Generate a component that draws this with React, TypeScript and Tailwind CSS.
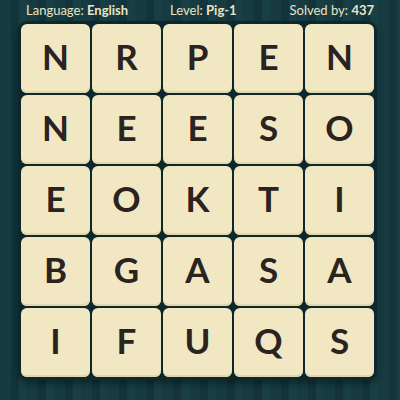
const LETTERS = [
  ['N', 'R', 'P', 'E', 'N'],
  ['N', 'E', 'E', 'S', 'O'],
  ['E', 'O', 'K', 'T', 'I'],
  ['B', 'G', 'A', 'S', 'A'],
  ['I', 'F', 'U', 'Q', 'S'],
];

function Tile({ letter }: { letter: string }) {
  return (
    <div className="w-[69px] h-[69px] rounded-[6px] bg-[#f1e8c3] shadow-[inset_0_-2px_0_#e3d7aa] flex items-center justify-center pb-[5px]">
      <span className="text-[35px] font-bold leading-none text-[#2a231f]">{letter}</span>
    </div>
  );
}

export default function App() {
  return (
    <div
      className="w-[400px] h-[400px] overflow-hidden bg-[repeating-linear-gradient(90deg,#163b41_0px,#163b41_11px,#12343a_11px,#12343a_19px,#183f45_19px,#183f45_27px)]"
      style={{ fontFamily: 'Lato, "Noto Sans", sans-serif' }}
    >
      {/* Header */}
      <div className="h-[21px] flex items-center px-[26px] text-[13px] text-[#ebe4c4]">
        <span>
          Language: <span className="font-bold">English</span>
        </span>
        <span className="ml-[42px]">
          Level: <span className="font-bold">Pig-1</span>
        </span>
        <span className="ml-auto">
          Solved by: <span className="font-bold">437</span>
        </span>
      </div>

      {/* Board */}
      <div className="ml-[18px] w-fit p-[3px] rounded-[9px] bg-[#0d282d] shadow-[0_4px_6px_rgba(0,0,0,0.35)]">
        <div className="grid grid-cols-5 gap-[2px]">
          {LETTERS.flat().map((l, i) => (
            <Tile key={i} letter={l} />
          ))}
        </div>
      </div>
    </div>
  );
}
